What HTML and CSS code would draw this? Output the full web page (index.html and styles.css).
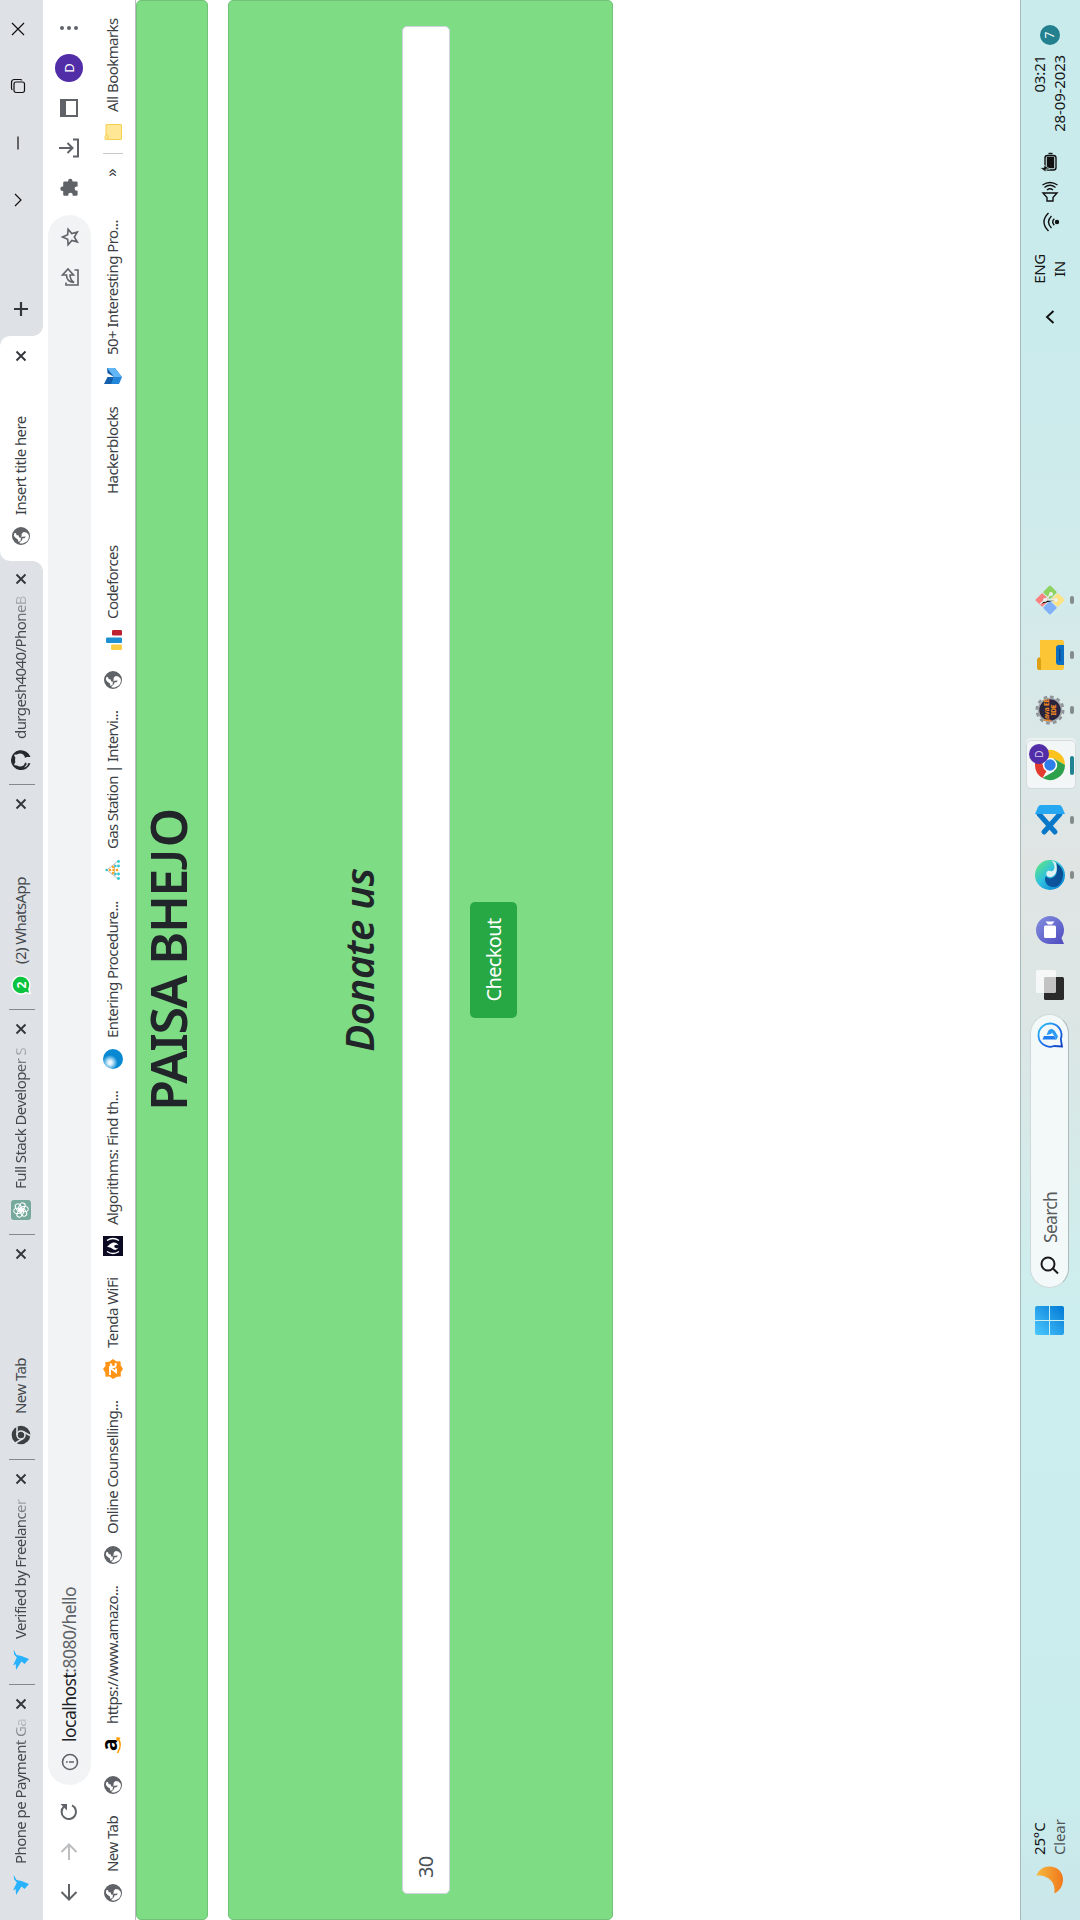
FILE: index.html
```html
<!DOCTYPE html>
<html lang="en">
<head>
<meta charset="utf-8">
<title>Insert title here</title>
<link rel="stylesheet" href="styles.css">
</head>
<body>
<svg class="defs" width="0" height="0">
  <defs>
    <linearGradient id="edgeA" x1="0" y1="0" x2="1" y2="1"><stop offset="0" stop-color="#0c59a4"/><stop offset="1" stop-color="#0a4a8c"/></linearGradient>
    <linearGradient id="edgeB" x1="1" y1="0" x2="0" y2="1"><stop offset="0" stop-color="#66eb6e"/><stop offset=".45" stop-color="#2fc2df"/><stop offset="1" stop-color="#0078d4"/></linearGradient>
    <linearGradient id="win" x1="0" y1="0" x2="1" y2="1"><stop offset="0" stop-color="#4cc9ff"/><stop offset="1" stop-color="#0078d4"/></linearGradient>
    <linearGradient id="moon" x1="0" y1="0" x2="0" y2="1"><stop offset="0" stop-color="#f6b93e"/><stop offset="1" stop-color="#f0781c"/></linearGradient>
    <linearGradient id="bing" x1="0" y1="1" x2="1" y2="0"><stop offset="0" stop-color="#123fc4"/><stop offset=".5" stop-color="#1b74f0"/><stop offset="1" stop-color="#2fc7f4"/></linearGradient>
    <linearGradient id="chat" x1="1" y1="0" x2="0" y2="1"><stop offset="0" stop-color="#8390e0"/><stop offset="1" stop-color="#4f4cc0"/></linearGradient>
    <radialGradient id="ball" cx=".32" cy=".35" r=".38"><stop offset="0" stop-color="#fff"/><stop offset=".3" stop-color="#d5effb"/><stop offset="1" stop-color="#0788d3"/></radialGradient>
  </defs>
  <symbol id="globe" viewBox="2 2 20 20"><path fill="#5f6368" d="M12 2a10 10 0 1 0 0 20 10 10 0 0 0 0-20zm0 2.1c1.300 0 2.500.3 3.600.900l-.6 1.500-2.200.7v2l-2.500.900-.3 2.300 4.500.4 2 2-.6 3.200-2.300 2.300-1.600.500A7.900 7.900 0 0 1 4.300 10l3.200 3.200 1.900.5v2.200l2 1.500-.2-4-1.200-1.500-3.600-.4-.7-2.500 2.500-.4 1.500-2.500z"/></symbol>
  <symbol id="bird" viewBox="0 0 20 20"><path fill="#29b2fe" d="M20.500 2.500L15 5.500l-1 5-3 7.500-5-4.500 2.500-3L0 5l6-.3L4.500 2l8 3.800 3-2.600z"/></symbol>
  <symbol id="x" viewBox="0 0 12 12"><path d="M1.500 1.500l9 9m0-9l-9 9" fill="none" stroke="#33363a" stroke-width="1.900"/></symbol>
</svg>
<div class="screen">
<div class="desktop">

  <header class="tabstrip">
    <div class="tab"><svg class="fav"><use href="#bird"/></svg><span class="title fade">Phone pe Payment Ga</span><svg class="close"><use href="#x"/></svg></div>
    <div class="tab"><svg class="fav"><use href="#bird"/></svg><span class="title fade">Verified by Freelancer</span><svg class="close"><use href="#x"/></svg></div>
    <div class="tab">
      <svg class="fav" viewBox="0 0 20 20"><circle cx="10" cy="10" r="9.300" fill="#3c4043"/><circle cx="10" cy="10" r="4" fill="none" stroke="#dee1e6" stroke-width="1.600"/><path d="M10 6h8.500M6.500 12L2.300 4.800M13.500 12l-4.300 7.500" stroke="#dee1e6" stroke-width="1.600"/></svg>
      <span class="title">New Tab</span><svg class="close"><use href="#x"/></svg></div>
    <div class="tab">
      <svg class="fav" viewBox="0 0 20 20"><rect width="20" height="20" rx="3" fill="#75a99c"/><g fill="none" stroke="#fff"><rect x="6.500" y="2.700" width="5.200" height="8.500" rx="2.600"/><rect x="6.500" y="2.700" width="5.200" height="8.500" rx="2.600" transform="rotate(60 10 10)"/><rect x="6.500" y="2.700" width="5.200" height="8.500" rx="2.600" transform="rotate(120 10 10)"/><rect x="6.500" y="2.700" width="5.200" height="8.500" rx="2.600" transform="rotate(180 10 10)"/><rect x="6.500" y="2.700" width="5.200" height="8.500" rx="2.600" transform="rotate(240 10 10)"/><rect x="6.500" y="2.700" width="5.200" height="8.500" rx="2.600" transform="rotate(300 10 10)"/></g></svg>
      <span class="title fade">Full Stack Developer S</span><svg class="close"><use href="#x"/></svg></div>
    <div class="tab">
      <svg class="fav" viewBox="0 0 20 20"><path fill="#fff" d="M10 .5a9.500 9.500 0 1 1-4 18.100L.5 20l1.300-5A9.500 9.500 0 0 1 10 .5z"/><path fill="#0ac33e" d="M10 1.800a8.200 8.200 0 1 1-4 15.300l-3.700 1 1-3.500A8.200 8.200 0 0 1 10 1.800z"/><text x="10" y="14.500" text-anchor="middle" class="fav-count">2</text></svg>
      <span class="title">(2) WhatsApp</span><svg class="close"><use href="#x"/></svg></div>
    <div class="tab last">
      <svg class="fav" viewBox="0 0 20 20"><path fill="#24292e" d="M10 0a10 10 0 0 0-3.200 19.500v-2.700c-2.300.4-3-1-3.600-2.200l-1-1c1.400-.4 2.300 1.200 2.900 1.700.7.4 1.400.2 1.900 0l.6-1.300C5 13.500 3.600 12 3.600 9c0-1.200.4-2.100 1-2.900-.2-.9 0-2 .3-2.900 1 0 2 .6 2.800 1.200a9 9 0 0 1 4.700 0c.8-.6 1.800-1.200 2.800-1.200.3.900.4 2 .2 2.900.6.8 1 1.700 1 2.900 0 3-1.600 4.500-4.300 5 .6.600.8 1.300.8 2.300v3.200A10 10 0 0 0 10 0z"/></svg>
      <span class="title fade">durgesh4040/PhoneB</span><svg class="close"><use href="#x"/></svg></div>
    <div class="tab active"><svg class="fav"><use href="#globe"/></svg><span class="title">Insert title here</span><svg class="close"><use href="#x"/></svg></div>
    <svg class="plus" viewBox="0 0 16 16"><path d="M8 1v14M1 8h14" stroke="#33363a" stroke-width="2.200"/></svg>
    <div class="window-buttons">
      <svg viewBox="0 0 16 16"><path d="M2 5l6 6 6-6" /></svg>
      <svg viewBox="0 0 16 16"><path d="M1.500 8h13"/></svg>
      <svg viewBox="0 0 16 16"><rect x="1.500" y="4" width="10.500" height="10.500" rx="2"/><path d="M4 2.300q1-.8 2-.8h5.500q3 0 3 3V10q0 1.500-.8 2"/></svg>
      <svg viewBox="0 0 16 16"><path d="M2 2l12 12M14 2L2 14"/></svg>
    </div>
  </header>

  <nav class="toolbar">
    <svg class="tool" viewBox="0 0 20 20"><path d="M18 10H3m7-7.500L2.500 10l7.500 7.500"/></svg>
    <svg class="tool off" viewBox="0 0 20 20"><path d="M2 10h15m-7-7.500l7.500 7.500-7.500 7.500"/></svg>
    <svg class="tool" viewBox="0 0 20 20"><path d="M16.600 13A7.200 7.200 0 1 1 15.500 5"/><path d="M18 1.500V8h-6.500z" class="solid"/></svg>
    <div class="omnibox">
      <svg class="info" viewBox="0 0 18 18"><circle cx="9" cy="9" r="7.500"/><path d="M9 8v5M9 5v1.700"/></svg>
      <span class="url"><b>localhost</b>:8080/hello</span>
      <svg class="share" viewBox="0 0 20 20"><path d="M4.500 6H2v12h15v-3.500M4.500 14c.5-5 3-7.500 7.500-7.500V2.500l6 5.500-6 5.500V10c-3 0-5.500 1-7.500 4z"/></svg>
      <svg class="star" viewBox="0 0 20 20"><path d="M10 2.500l2.200 5.200 5.600.4-4.300 3.700 1.400 5.500-4.900-3-4.900 3 1.400-5.500L2.200 8.100l5.600-.4z"/></svg>
    </div>
    <svg class="tool puzzle" viewBox="0 0 20 20"><path class="solid" d="M7 3.500a2.200 2.200 0 0 1 4.400 0v.7h3.800q1.300 0 1.300 1.300v3.600h.6a2.200 2.200 0 0 1 0 4.400h-.6v3.800q0 1.300-1.300 1.300h-3.600v-.8a2.200 2.200 0 0 0-4.400 0v.8H3.600q-1.300 0-1.300-1.300v-3.600h.8a2.200 2.200 0 0 0 0-4.500h-.8V5.500q0-1.300 1.300-1.300H7z"/></svg>
    <svg class="tool" viewBox="0 0 20 20"><path d="M1.500 14v5h17v-5M10 0v13M5 8.500l5 5 5-5"/></svg>
    <svg class="tool" viewBox="0 0 20 20"><path d="M2 2h16v16H2z"/><path class="solid" d="M2 1h16v6H2z"/></svg>
    <span class="avatar">D</span>
    <svg class="tool" viewBox="0 0 20 20"><g class="dots"><circle cx="10" cy="3" r="2"/><circle cx="10" cy="10" r="2"/><circle cx="10" cy="17" r="2"/></g></svg>
  </nav>

  <nav class="bookmarks">
    <a><svg><use href="#globe"/></svg><span>New Tab</span></a>
    <a><svg><use href="#globe"/></svg></a>
    <a><svg viewBox="0 0 20 20"><text x="10" y="14" text-anchor="middle" class="amazon">a</text><path d="M2 14.500q8 5 14 .8M14 14l3 .2-.6 3" fill="none" stroke="#f90" stroke-width="1.500"/></svg><span>https://www.amazo...</span></a>
    <a><svg><use href="#globe"/></svg><span>Online Counselling...</span></a>
    <a><svg viewBox="0 0 20 20"><path fill="#ff9416" d="M10 0l3 2.500 4-.2.300 3.800L20 10l-2.500 3.500.2 4-4 .2L10 20l-3.500-2.300-4 .2-.2-4L0 10l2.500-3.500-.2-4 4-.2z"/><path fill="none" stroke="#fff" stroke-width="1.900" d="M4 7h7.500L7 13h3.500m5-5q-3.500-.5-3.500 2.500t4 2"/></svg><span>Tenda WiFi</span></a>
    <a><svg viewBox="0 0 20 20"><path fill="#0a0a23" d="M0 0h20v20H0z"/><path fill="none" stroke="#fff" stroke-width="1.400" d="M4.500 4q-4 6 0 12m11-12q4 6 0 12"/><path fill="#fff" d="M9 4q4 3 4.500 6 .5 4-3 5.500 1.500-2-.5-4.500-.8 1-1.200.5Q6.500 14 9 15.500 5 14 6.500 10.500 9.500 7.500 9 4z"/></svg><span>Algorithms: Find th...</span></a>
    <a><svg viewBox="0 0 20 20"><circle cx="10" cy="10" r="10" fill="url(#ball)"/></svg><span>Entering Procedure...</span></a>
    <a><svg viewBox="0 0 20 20"><path d="M1 15L10 4l9 11M4 11.500h12" fill="none" stroke="#b8bcc0"/><g fill="#ffa726"><circle cx="10" cy="7" r="1.300"/><circle cx="7" cy="10" r="1.300"/><circle cx="13" cy="10" r="1.300"/><circle cx="10" cy="10.500" r="1.300"/><circle cx="10" cy="14" r="1.300"/></g><g fill="#2fc5cf"><circle cx="1.500" cy="15.500" r="1.400"/><circle cx="6" cy="15.500" r="1.400"/><circle cx="14" cy="15.500" r="1.400"/><circle cx="18.500" cy="15.500" r="1.400"/><circle cx="14" cy="12.500" r="1.200"/><circle cx="6" cy="12.500" r="1.200"/><circle cx="10" cy="3.500" r="1.200"/></g></svg><span class="gas">Gas Station | Intervi...</span></a>
    <a><svg><use href="#globe"/></svg></a>
    <a><svg viewBox="0 0 20 20"><rect x="0" y="8" width="5.500" height="11" rx="1.300" fill="#fbcd45"/><rect x="7" y="3" width="5.500" height="16" rx="1.300" fill="#1e8fd0"/><rect x="14.500" y="9" width="5.500" height="10" rx="1.300" fill="#bd2130"/></svg><span>Codeforces</span></a>
    <a><svg></svg><span>Hackerblocks</span></a>
    <a><svg viewBox="0 0 20 20"><path fill="#1260ac" d="M2 1l7 3.500V11l-7-2z"/><path fill="#2287da" d="M2 8l7 3 9-7v8l-9 7-7-3z"/><path fill="#62b5f6" d="M9 11l9-7v7.500L9 19z"/><path fill="#0d58a0" d="M9 11l4-6.500 5-.5z"/></svg><span>50+ Interesting Pro...</span></a>
    <a class="more"><span>»</span></a>
    <a class="all"><svg viewBox="0 0 16 18"><path fill="#ffe796" stroke="#f5cf50" d="M.5 4.500V17q0 .5.500.5h14q.5 0 .5-.5V2.500q0-.5-.5-.5H5.500L3.500 1h-2q-1 0-1 1zM.5 4h4L6 2"/></svg><span>All Bookmarks</span></a>
  </nav>

  <main class="page">
    <section class="card banner"><h1>PAISA BHE<span class="letter-j">J</span>O</h1></section>
    <section class="card form">
      <h2>Donate us</h2>
      <div class="amount">30</div>
      <button class="checkout">Checkout</button>
    </section>
  </main>

  <footer class="taskbar">
    <div class="weather">
      <svg viewBox="0 0 28 28"><path fill="url(#moon)" d="M18.500.5C25 3 28 8.500 27.500 14.500 27 22 21.500 27 14.500 27 8 27 3 23.500.5 18.300 11 20.500 19.500 12.500 18.500.5z"/></svg>
      <div class="two digits"><span>25°C</span><span class="dim">Clear</span></div>
    </div>
    <svg class="start" viewBox="0 0 29 29"><path fill="url(#win)" d="M2 0h12v14H0V2q0-2 2-2zM15 0h12q2 0 2 2v12H15zM0 15h14v14H2q-2 0-2-2zM15 15h14v12q0 2-2 2H15z"/></svg>
    <div class="search">
      <svg class="lens" viewBox="0 0 20 20"><circle cx="11" cy="8" r="6.500"/><path d="M6.500 13l-5 5"/></svg>
      <span>Search</span>
      <svg class="bing" viewBox="0 0 26 26"><path fill="#f3f9f9" stroke="url(#bing)" stroke-width="1.800" d="M13 1.500a11.500 11.500 0 1 1-4 22.300L1.500 25 2 17A11.500 11.500 0 0 1 13 1.500z"/><path fill="#1f7df0" d="M8.500 5.500l3.500 1.500v10l-3.500 2.500z"/><path fill="#2b9bf5" d="M13 9.500l4.500 2q2 1 1.500 3.500-.5 2-3 3.500l-4.500 2.500-3-1.500 7-4.500-1.500-1z"/></svg>
    </div>
    <div class="apps">
      <div class="app"><svg viewBox="0 0 30 30"><rect x="0" y="9" width="23" height="20" rx="1.500" fill="#2a2a2a"/><rect x="7" y="1" width="23" height="20" rx="1.500" fill="#fff" opacity=".72"/></svg></div>
      <div class="app"><svg viewBox="0 0 30 30"><path fill="url(#chat)" d="M15 1a14 14 0 1 1-8 25.500L1 29V15A14 14 0 0 1 15 1z"/><rect x="7" y="9" width="12.500" height="12" rx="1.500" fill="#fff"/><path fill="#fff" d="M20.500 13l3-2.500v9l-3-2.500z"/></svg></div>
      <div class="app run"><svg viewBox="0 0 30 30"><circle cx="15" cy="15" r="15" fill="url(#edgeB)"/><path fill="url(#edgeA)" d="M3 20C2 12 9 8 14 11c-3 2-3 5-1 8 3 4 9 3 14 2-3 5-8 8-13 7C9 27 4 25 3 20z"/><path fill="#def0f0" d="M14 12c4-2 6 1 5 3.500-1 2 1 4 4 4 3-.2 5-1.500 6.500-3-.5 2-1.500 3.500-2.500 4.500-5 1.500-10 1-12.500-2-2-2.500-2-5-.5-7z"/></svg></div>
      <div class="app run"><svg viewBox="0 0 30 30"><path fill="none" stroke="#0a78c8" stroke-width="5" stroke-linecap="round" d="M3 9l18 16M3 20L21 4"/><path fill="#25a7f2" d="M21 0l7 3q2 1 2 3v18q0 2-2 3l-7 3z"/></svg></div>
      <div class="app run current"><svg viewBox="0 0 30 30"><path fill="#e33b2e" d="M15 15L2 7.500A15 15 0 0 1 28 7.500H15z"/><path fill="#fcc31e" d="M15 15h0L28 7.500A15 15 0 0 1 15 30l6.500-11.200z"/><path fill="#2da04c" d="M2 7.500A15 15 0 0 0 15 30l6.500-11.200L8.500 18.800z"/><circle cx="15" cy="15" r="7.200" fill="#fff"/><circle cx="15" cy="15" r="5.700" fill="#2f7de9"/></svg><i class="badge">D</i></div>
      <div class="app run"><svg viewBox="0 0 30 30"><circle cx="15" cy="15" r="13" fill="none" stroke="#8f9499" stroke-width="3" stroke-dasharray="3.600 3.200"/><circle cx="15" cy="15" r="11.500" fill="#29243d" stroke="#a2a6aa" stroke-width="1.600"/><text x="15" y="13.500" text-anchor="middle" class="java">Java EE</text><text x="15" y="20.500" text-anchor="middle" class="java">IDE</text></svg></div>
      <div class="app run"><svg viewBox="0 0 30 30"><path fill="#dda014" d="M0 4q0-2 2-2h9q2 1 2 4H0z"/><path fill="#fcc535" d="M0 6h10l3-1h17v22q0 2-2 2H2q-2 0-2-2z"/><path fill="#0c6fc4" d="M5 29v-5q0-3 3-3h14q3 0 3 3v5z"/><path fill="#084d94" d="M9 24h12v1.500H9z"/></svg></div>
      <div class="app run"><svg viewBox="0 0 30 30"><g transform="rotate(45 15 15)"><rect x="4.500" y="4.500" width="10" height="10" rx="1" fill="#f8807e"/><rect x="15.500" y="4.500" width="10" height="10" rx="1" fill="#8ed25f"/><rect x="4.500" y="15.500" width="10" height="10" rx="1" fill="#80b1f8"/><rect x="15.500" y="15.500" width="10" height="10" rx="1" fill="#ffe281"/></g><path stroke="#e8f0f0" stroke-width="1.400" d="M11 5l4 5v11M15 10l6 6"/><g fill="#e8f0f0"><circle cx="15" cy="10" r="2"/><circle cx="21" cy="16" r="2"/><circle cx="15" cy="21" r="2"/></g></svg></div>
    </div>
    <div class="tray">
      <svg class="up" viewBox="0 0 14 10"><path d="M1 8.500l6-6.500 6 6.500"/></svg>
      <div class="two lang"><span>ENG</span><span>IN</span></div>
      <svg class="sys" viewBox="0 0 20 20"><path d="M1 8.500q9-9 18 0M4 11.500q6-6 12 0M6.800 14.300q3.200-3.200 6.400 0"/><circle cx="10" cy="17" r="1.500" fill="#111"/></svg>
      <svg class="sys" viewBox="0 0 20 20"><path d="M1 7h3.500L9 3v14l-4.500-4H1zM12 7q2.500 3 0 6M14.500 4.500q4.500 5.500 0 11M17 2.500q5 7.500 0 15"/></svg>
      <svg class="sys" viewBox="0 0 20 20"><rect x="2" y="5" width="14.500" height="11" rx="2.500"/><path d="M4.500 7.500h10v6h-10z" fill="#111"/><path d="M18.500 8.500v4"/><path fill="#111" stroke="#cbecec" stroke-width=".7" d="M4 0L0 6h3v4l4-6H4.500z"/></svg>
      <div class="two digits clock"><span>03:21</span><span>28-09-2023</span></div>
      <span class="count">7</span>
    </div>
  </footer>
</div>
</div>
</body>
</html>
```
FILE: styles.css
```css
* { box-sizing: border-box; }
body { margin: 0; background: #fff; font-family: "Noto Sans", "Open Sans", sans-serif; }
svg { display: block; flex: none; overflow: visible; }
.defs { position: absolute; }

/* The display is mounted in portrait: the desktop is turned a quarter left. */
.screen { width: 1080px; height: 1920px; overflow: hidden; }
.desktop {
  width: 1920px; height: 1080px;
  display: flex; flex-direction: column;
  transform: translateY(1920px) rotate(-90deg);
  transform-origin: 0 0;
  background: #fff;
}

/* Tab strip */
.tabstrip { height: 43px; flex: none; display: flex; background: #dee1e6; padding-left: 11px; position: relative; }
.tab {
  width: 225px; height: 43px; padding: 0 14px;
  display: flex; align-items: center; position: relative;
  font-size: 15px; color: #45494d; padding-bottom: 1px;
}
.tab::after { content: ""; position: absolute; right: 0; top: 9px; width: 1px; height: 26px; background: #85888c; }
.tab.last::after { display: none; }
.fav { width: 20px; height: 20px; margin-right: 11px; }
.title { width: 150px; white-space: nowrap; letter-spacing: -.58px; line-height: 22px; padding-bottom: 2px; }
.title.fade {
  -webkit-mask-image: linear-gradient(90deg, #000 115px, rgba(0,0,0,.15) 145px);
  mask-image: linear-gradient(90deg, #000 115px, rgba(0,0,0,.15) 145px);
}
.close { width: 12px; height: 12px; margin-left: 4px; }
.fav-count { font: 700 12px "Noto Sans", sans-serif; fill: #fff; }
.tab.active { background: #fff; border-radius: 10px 10px 0 0; margin-left: -2px; padding-left: 16px; color: #3c4043; }
.tab.active .fav { width: 18px; height: 18px; margin-right: 12px; }
.tab.active::before, .tab.active::after {
  content: ""; position: absolute; bottom: 0; top: auto; width: 10px; height: 10px;
}
.tab.active::before { left: -10px; background: radial-gradient(circle at 0 0, #dee1e6 9.500px, #fff 10px); }
.tab.active::after { right: -10px; background: radial-gradient(circle at 100% 0, #dee1e6 9.500px, #fff 10px); }
.plus { width: 16px; height: 16px; margin: 13px 0 0 19px; }
.window-buttons { display: flex; gap: 41px; margin: 10px 21px 0 auto; }
.window-buttons svg { width: 16px; height: 16px; fill: none; stroke: #111; stroke-width: 1.200; }

/* Toolbar */
.toolbar { height: 48px; flex: none; display: flex; align-items: center; padding: 5px 17px 0 18px; gap: 20px; }
.tool { width: 20px; height: 20px; fill: none; stroke: #5f6368; stroke-width: 2; margin-bottom: 2px; }
.tool.off { stroke: #bcbec0; }
.solid { fill: #5f6368; stroke: none; }
.dots { fill: #5f6368; stroke: none; }
.omnibox {
  width: 1570px; height: 43px; margin-left: -3px; border-radius: 22px; background: #f1f3f4;
  display: flex; align-items: center; padding: 0 12px 0 14px;
}
.puzzle { margin-left: -3px; }
.info { width: 18px; height: 18px; fill: none; stroke: #5f6368; stroke-width: 1.600; }
.url { margin-left: 11px; font-size: 17.500px; letter-spacing: -.52px; color: #5f6368; line-height: 24px; margin-top: -1px; }
.url b { font-weight: 400; color: #202124; }
.share, .star { width: 20px; height: 20px; fill: none; stroke: #5f6368; stroke-width: 1.600; }
.share { margin-left: auto; margin-right: 20px; }
.avatar {
  width: 28px; height: 28px; margin: -2px -4px 0; border-radius: 50%; background: #512da8; color: #fff;
  font-size: 13px; text-align: center; line-height: 28px;
}

/* Bookmarks bar */
.bookmarks {
  height: 45px; flex: none; padding-left: 17px; border-bottom: 1px solid #b9bcc0;
  display: grid; align-items: center;
  grid-template-columns: 108px 40px 190px 186px 123px 187px 189px 190px 40px 125px 139px 209px 23px 137px;
  font-size: 15px; color: #3c4043; letter-spacing: -.56px;
}
.bookmarks a { display: flex; align-items: center; gap: 11px; height: 42px; white-space: nowrap; }
.bookmarks a span { padding-bottom: 3px; }
.bookmarks .gas { letter-spacing: -.66px; }
.bookmarks svg { width: 20px; height: 20px; }
.bookmarks svg:has(use) { padding: 1px; }
.bookmarks .amazon { font: 700 21px "Open Sans", sans-serif; fill: #000; }
.bookmarks .more { font-size: 17px; }
.bookmarks .more span { padding-bottom: 6px; }
.bookmarks .all { height: 20px; border-left: 1px solid #c6c8ca; padding-left: 13px; gap: 12px; }
.bookmarks .all svg { width: 16px; height: 18px; }

/* Page */
.page { flex: 1; display: flex; flex-direction: column; gap: 20px; }
.card { border: 1px solid #72c278; border-radius: 5px; background: #7ddc84; color: #212529; }
h1, h2 { margin: 0; font-weight: 600; text-align: center; line-height: 1.200; }
.banner { height: 72px; }
h1 { font-size: 50px; padding-top: 1px; letter-spacing: -1.400px; }
.letter-j { font-family: Lato, sans-serif; font-weight: 600; line-height: 1; margin-right: 3px; }
.form { height: 385px; padding: 106px 25px 0; display: flex; flex-direction: column; align-items: center; }
h2 { font-size: 40px; font-style: italic; height: 48px; letter-spacing: -.3px; }
.amount {
  width: 100%; height: 48px; margin-top: 19px; padding-left: 15px;
  border: 1px solid #ced4da; border-radius: 5px; background: #fff;
  font-size: 20px; line-height: 46px; color: #495057; letter-spacing: -.7px;
}
.checkout {
  width: 116px; height: 47px; margin-top: 20px; padding: 0 0 1px; border: 0; border-radius: 5px;
  background: #28a745; color: #fff; font: 20px "Noto Sans", sans-serif; letter-spacing: -.65px;
}

/* Taskbar */
.taskbar {
  height: 60px; flex: none; border-top: 1px solid #a8b9bc; display: flex; align-items: center; padding: 0 0 2px 26px;
  background: linear-gradient(90deg, #cbe6ea 0, #c9ecec 120px, #cdeeee 620px, #dce6e4 900px, #e0e5e4 1060px, #d2ebeb 1340px, #c9ebec 1600px);
  color: #151515;
}
.two { display: flex; flex-direction: column; font-size: 15px; line-height: 20px; letter-spacing: -.4px; padding-bottom: 2px; }
.two.digits { letter-spacing: -.15px; }
.weather { display: flex; align-items: center; gap: 11px; width: 559px; }
.weather svg { width: 28px; height: 28px; }
.dim { color: #4e5658; }
.start { width: 29px; height: 29px; }
.search {
  width: 274px; height: 39px; margin-left: 18px; border-radius: 20px; background: #f3f9f9;
  border: 1px solid #d0d9d9; border-bottom-color: #aebaba;
  display: flex; align-items: center; padding: 0 7px 0 12px;
}
.search span { font-size: 17.500px; color: #5a5c5d; letter-spacing: -.7px; margin-left: 12px; }
.lens { width: 20px; height: 20px; fill: none; stroke: #1a1a1a; stroke-width: 2; }
.bing { width: 26px; height: 26px; margin-left: auto; }
.apps { display: flex; margin-left: 1px; }
.app { width: 55px; height: 48px; display: flex; align-items: center; justify-content: center; position: relative; }
.app svg { width: 30px; height: 30px; }
.app.run::after {
  content: ""; position: absolute; left: 23.500px; bottom: 0; width: 8px; height: 4px; border-radius: 2px; background: #858c8c;
}
.app.current::before {
  content: ""; position: absolute; left: 4px; top: 0; width: 47px; height: 48px; border-radius: 5px;
  background: #f2f6f6; border: 1px solid #d4dcdb; box-shadow: 2px 0 0 #edf2f1;
}
.app.current svg { position: relative; }
.app.current::after { left: 18px; width: 19px; background: #218391; }
.badge {
  position: absolute; left: 29px; top: 3px; width: 20px; height: 20px; border-radius: 50%;
  background: #512da8; color: #d8cfee; font: 10px/20px "Noto Sans", sans-serif; text-align: center;
}
.java { font: 700 7px "Noto Sans", sans-serif; letter-spacing: -.3px; fill: #f58a1f; }
.tray { margin-left: auto; padding-right: 25px; display: flex; align-items: center; }
.up { width: 14px; height: 10px; fill: none; stroke: #111; stroke-width: 1.900; margin-right: 26px; }
.lang { width: 30px; margin-right: 22px; align-items: center; }
.sys { width: 20px; height: 20px; margin-right: 10px; fill: none; stroke: #111; stroke-width: 1.400; }
.clock { width: 87px; align-items: flex-end; margin-right: 10px; white-space: nowrap; }
.count { width: 20px; height: 20px; border-radius: 50%; background: #22808f; color: #fff; font-size: 12px; line-height: 20px; text-align: center; }
```
